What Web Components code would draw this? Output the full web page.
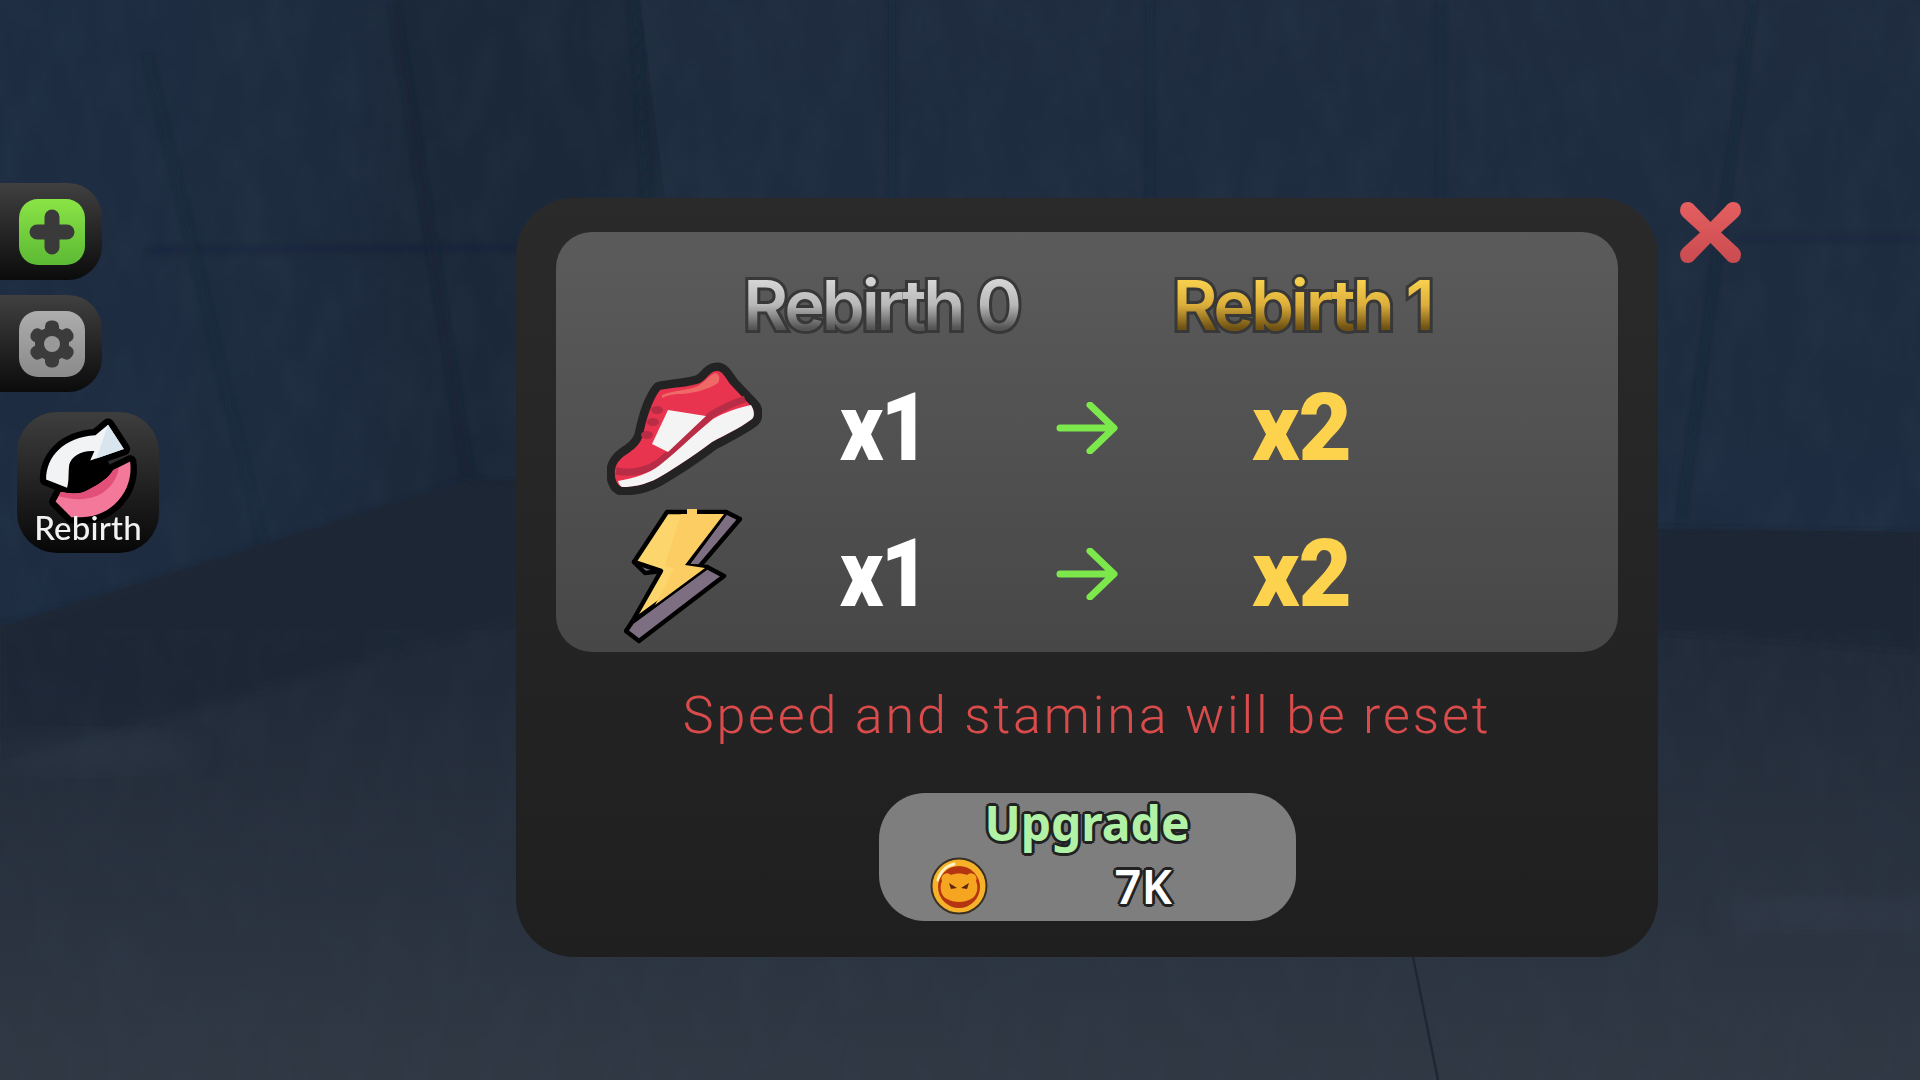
<!DOCTYPE html>
<html lang="en">
<head>
<meta charset="utf-8">
<title>Rebirth</title>
<style>
html,body{margin:0;padding:0;background:#1e2c42;}
</style>
</head>
<body>
<game-screen>
  <game-scene></game-scene>
  <side-rail>
    <rail-button>
      <svg viewBox="0 0 66 66" width="66" height="66" aria-hidden="true">
        <defs><linearGradient id="g" x1="0" y1="0" x2="0" y2="1"><stop offset="0" stop-color="#8ae446"/><stop offset="1" stop-color="#5cb934"/></linearGradient></defs>
        <rect width="66" height="66" rx="19" fill="url(#g)"/>
        <path d="M33 18V48M18 33H48" stroke="#3a3a3a" stroke-width="15" stroke-linecap="round" fill="none"/>
      </svg>
    </rail-button>
    <rail-button>
      <svg viewBox="0 0 66 66" width="66" height="66" aria-hidden="true">
        <defs><linearGradient id="s" x1="0" y1="0" x2="0" y2="1"><stop offset="0" stop-color="#adadad"/><stop offset="1" stop-color="#8a8a8a"/></linearGradient></defs>
        <rect width="66" height="66" rx="19" fill="url(#s)"/>
        <g fill="#3b3b3b">
          <circle cx="33" cy="33" r="17"/>
          <rect x="26" y="9.500" width="14" height="47" rx="6"/>
          <rect x="26" y="9.500" width="14" height="47" rx="6" transform="rotate(60 33 33)"/>
          <rect x="26" y="9.500" width="14" height="47" rx="6" transform="rotate(120 33 33)"/>
        </g>
        <circle cx="33" cy="33" r="8" fill="#999"/>
      </svg>
    </rail-button>
    <rebirth-button>Rebirth</rebirth-button>
  </side-rail>
  <rebirth-modal>
    <stat-board>
      <glow-title tone="silver" style="grid-column:2">Rebirth 0</glow-title>
      <glow-title tone="gold" style="grid-column:4">Rebirth 1</glow-title>

      <svg style="grid-column:1" viewBox="17 12 155 133" width="155" height="133" aria-hidden="true">
        <path d="M70 40C84 37 100 37 110 33C117 29 120 21 127 21C133 21 136 29 141 35L161 56C165 60 165 66 162 69C150 78 135 85 122 92C105 105 85 118 68 128C55 135 42 137 33 137C27 137 24 128 25 120C26 112 32 107 40 102C47 97 51 92 53 85C56 70 62 50 70 40Z" fill="#e8344f" stroke="#232323" stroke-width="17" stroke-linejoin="round"/>
        <path d="M70 40C84 37 100 37 110 33C117 29 120 21 127 21C133 21 136 29 141 35L161 56C165 60 165 66 162 69C150 78 135 85 122 92C105 105 85 118 68 128C55 135 42 137 33 137C27 137 24 128 25 120C26 112 32 107 40 102C47 97 51 92 53 85C56 70 62 50 70 40Z" fill="#e8344f"/>
        <path d="M72 45C85 40 100 40 108 36C115 32 120 24 126 23C130 25 130 30 128 33C118 40 100 44 90 44C83 44 76 46 72 48Z" fill="#ef6a66"/>
        <path d="M155 49C143 53 131 59 121 65C103 82 88 97 68 113C56 121 42 124 26 121" fill="none" stroke="#b92c45" stroke-width="7"/>
        <path d="M161 55C164 60 165 66 162 69C150 78 135 85 122 92C105 105 85 118 68 128C55 135 42 137 33 137C31 137 29 135 28 131C45 128 58 124 70 115C88 101 103 85 123 69C133 63 150 57 161 55Z" fill="#f5f4f4"/>
        <path d="M78 60L116 66L78 102L62 94Z" fill="#f5f4f4"/>
        <g fill="#b92c45"><ellipse cx="67" cy="60" rx="6" ry="4"/><ellipse cx="63" cy="72" rx="6" ry="4"/><ellipse cx="57" cy="85" rx="6" ry="4"/></g>
      </svg>
      <big-value style="grid-column:2">x1</big-value>
      <green-arrow style="grid-column:3"></green-arrow>
      <big-value tone="gold" style="grid-column:4">x2</big-value>

      <svg style="grid-column:1" viewBox="35 156 120 139" width="120" height="139" aria-hidden="true">
        <g stroke="#000" stroke-width="4.500" stroke-linejoin="round">
          <path d="M137 163L151 170L110 218L97 217Z" fill="#7d6e82"/>
          <path d="M118 218L135 227L50 292L37 282L43 273Z" fill="#7d6e82"/>
          <path d="M45 213L56 224L72 222L60 214Z" fill="#7d6e82"/>
          <path d="M78 163H137L97 217L118 218L43 273L72 222L45 213Z" fill="#fdd56d"/>
        </g>
        <path d="M92 165H135L96 216L116 219L66 256L85 220L76 216Z" fill="#fbcd62"/>
        <rect x="98" y="160" width="10" height="5" fill="#fbcd62"/>
      </svg>
      <big-value style="grid-column:2">x1</big-value>
      <green-arrow style="grid-column:3"></green-arrow>
      <big-value tone="gold" style="grid-column:4">x2</big-value>
    </stat-board>
    <warn-line>Speed and stamina will be reset</warn-line>
    <upgrade-button cost="7K">Upgrade</upgrade-button>
  </rebirth-modal>
  <close-cross></close-cross>
</game-screen>

<script>
function def(name, css, html, init) {
  customElements.define(name, class extends HTMLElement {
    constructor() {
      super();
      const r = this.attachShadow({mode:'open'});
      r.innerHTML = '<style>' + css + '</style>' + html;
    }
    connectedCallback() { if (init) init(this, this.shadowRoot); }
  });
}

def('game-screen',
  ':host{display:flex;position:relative;width:1920px;height:1080px;overflow:hidden;background:#1e2c42;align-items:flex-start;}',
  '<slot></slot>');

def('game-scene',
  ':host{position:absolute;left:0;top:0;width:1920px;height:1080px;display:block;}svg{display:block;}',
  `<svg width="1920" height="1080" viewBox="0 0 1920 1080" aria-hidden="true">
    <defs>
      <linearGradient id="wall" x1="0" y1="0" x2="0" y2="1"><stop offset="0" stop-color="#1f2c40"/><stop offset="1" stop-color="#1d2c42"/></linearGradient>
      <linearGradient id="wallL" x1="0" y1="0" x2="1" y2="0"><stop offset="0" stop-color="#1d2c41"/><stop offset=".6" stop-color="#1e2c40"/><stop offset="1" stop-color="#1b2739"/></linearGradient>
      <linearGradient id="floor" x1="0" y1="0" x2="0" y2="1"><stop offset="0" stop-color="#1c2634"/><stop offset=".3" stop-color="#222b39"/><stop offset="1" stop-color="#303844"/></linearGradient>
      <filter id="soft" x="-5%" y="-5%" width="110%" height="110%"><feGaussianBlur stdDeviation="3"/></filter>
      <filter id="soft2" x="-20%" y="-20%" width="140%" height="140%"><feGaussianBlur stdDeviation="14"/></filter>
      <filter id="grain" x="0" y="0" width="100%" height="100%">
        <feTurbulence type="fractalNoise" baseFrequency="0.03 0.014" numOctaves="3" seed="7"/>
        <feColorMatrix values="0 0 0 0 .05  0 0 0 0 .08  0 0 0 0 .12  1.6 0 0 0 -.55"/>
      </filter>
    </defs>
    <rect width="1920" height="1080" fill="url(#wall)"/>
    <polygon points="0,0 393,0 469,480 0,627" fill="url(#wallL)"/>
    <polygon points="393,0 640,0 700,480 469,480" fill="#1b283a"/>
    <rect width="1920" height="640" filter="url(#grain)" opacity=".14"/>
    <g fill="none" stroke="#16202f" filter="url(#soft)">
      <path d="M147 55L263 544" stroke-width="5" opacity=".4"/>
      <path d="M393 0L469 480" stroke-width="6" opacity=".55"/>
      <path d="M634 0L647 200" stroke-width="5" opacity=".4"/>
      <path d="M892 0V200M1150 0V200M1440 0V200" stroke-width="5" opacity=".3"/>
      <path d="M147 250L470 248L700 246" stroke-width="4" opacity=".25"/>
      <path d="M1740 238H1920" stroke-width="3" opacity=".25"/>
      <path d="M1753 0L1680 523" stroke-width="4" opacity=".45"/>
    </g>
    <polygon points="0,627 469,480 1000,480 1660,529 1920,532 1920,1080 0,1080" fill="url(#floor)"/>
    <polygon points="0,627 469,480 520,483 520,620 0,762" fill="#1c2634" opacity=".85" filter="url(#soft)"/>
    <polygon points="1655,529 1920,533 1920,650 1655,630" fill="#1c2634" opacity=".9" filter="url(#soft)"/>
    <polygon points="0,762 520,620 1000,620 1000,1080 0,1080" fill="url(#floor)" opacity=".35"/>
    <ellipse cx="90" cy="752" rx="110" ry="18" fill="#333d4c" opacity=".4" filter="url(#soft2)"/>
    <ellipse cx="1830" cy="915" rx="110" ry="14" fill="#394252" opacity=".4" filter="url(#soft2)"/>
    <rect y="630" width="1920" height="450" filter="url(#grain)" opacity=".1"/>
    <path d="M1413 957L1438 1080" stroke="#1f2734" stroke-width="2.500" fill="none"/>
  </svg>`);

def('side-rail',
  ':host{display:flex;position:relative;flex-direction:column;align-items:flex-start;width:516px;flex:none;padding-top:183px;box-sizing:border-box;}',
  '<slot></slot>');

def('rail-button',
  `:host{display:flex;align-items:center;justify-content:flex-end;box-sizing:border-box;width:102px;height:97px;padding-right:17px;margin-bottom:15px;
     border-radius:0 34px 34px 0;background:linear-gradient(#404040,#0b0b0b);}`,
  '<slot></slot>');

def('rebirth-button',
  `:host{display:block;position:relative;box-sizing:border-box;width:142px;height:141px;margin:5px 0 0 17px;border-radius:40px;
     background:linear-gradient(#3e3e3e,#070707);font:500 33px/1 "Lato","Noto Sans",sans-serif;color:#f2f2f2;}
   svg{position:absolute;left:0;top:0;display:block;}
   .l{position:absolute;left:0;right:0;bottom:9px;text-align:center;letter-spacing:.2px;}`,
  `<svg viewBox="7 7 142 141" width="142" height="141" aria-hidden="true">
     <g transform="translate(76 66) scale(1.05) translate(-76 -66)">
       <g stroke="#000" stroke-width="12" stroke-linejoin="round" fill="#000">
         <path d="M38 74C38 52 55 34 85 32L97 22L112 45L80 56L84 47C72 46 62 52 60 60C59 68 60 75 58 82Z"/>
         <path d="M118 57C122 85 100 110 72 110L62 110L47 95L52 86C62 88 72 88 78 84C90 78 98 72 102 65Z"/>
         <circle cx="78" cy="68" r="16"/>
       </g>
       <path d="M38 74C38 52 55 34 85 32L97 22L112 45L80 56L84 47C72 46 62 52 60 60C59 68 60 75 58 82Z" fill="#f1f3f5"/>
       <path d="M97 22L112 45L86 54Z" fill="#d8e5ee"/>
       <path d="M118 57C122 85 100 110 72 110L62 110L47 95L52 86C62 88 72 88 78 84C90 78 98 72 102 65Z" fill="#f4789a"/>
       <path d="M52 86C62 88 72 88 78 84C90 78 98 72 102 65L107 63C106 76 94 90 78 92C68 94 58 92 50 90Z" fill="#e2507a"/>
     </g>
   </svg><div class="l"><slot></slot></div>`);

def('rebirth-modal',
  `:host{display:flex;position:relative;flex:none;flex-direction:column;align-items:center;box-sizing:border-box;width:1142px;height:759px;margin-top:198px;padding:34px 40px 36px;
     border-radius:58px;background:linear-gradient(#2b2a2a,#201f1f);}`,
  '<slot></slot>');

def('stat-board',
  `:host{display:grid;box-sizing:border-box;width:1062px;height:420px;flex:none;padding-top:40px;
     grid-template-columns:256px 138px 274px 156px 238px;grid-template-rows:80px 140px 140px;row-gap:6px;justify-items:center;align-items:center;
     border-radius:36px;background:linear-gradient(#5b5b5b,#474747);}`,
  '<slot></slot>');

def('glow-title',
  `:host{display:block;align-self:start;position:relative;white-space:nowrap;font:600 69px/66px "Inter","DejaVu Sans",sans-serif;letter-spacing:-3.2px;}
   .t{position:relative;display:block;color:transparent;-webkit-background-clip:text;background-clip:text;}
   :host([tone=silver]) .t{background-image:linear-gradient(#d4d4d4 15%,#b8b8b8 50%,#555 85%);}
   :host([tone=gold]) .t{background-image:linear-gradient(#f6cf4d 15%,#dcae3a 50%,#6f5213 85%);}
   .o{position:absolute;left:0;top:0;color:transparent;-webkit-text-stroke:6px #383838;}
   .o::before{content:attr(data-t);}`,
  '<span class="o"></span><span class="t"><slot></slot></span>',
  (h,r)=>{ r.querySelector('.o').setAttribute('data-t', h.textContent); });

def('big-value',
  `:host{display:block;font:900 94px/1 "Roboto","Liberation Sans",sans-serif;color:#fff;white-space:nowrap;transform:translateX(2px) scaleX(.9);letter-spacing:-3px;}
   :host([tone=gold]){color:#fdd24d;transform:translateX(-1px) scaleX(.98);letter-spacing:-1px;}`,
  '<slot></slot>');

def('green-arrow',
  ':host{display:block;width:62px;height:52px;}svg{display:block;}',
  `<svg viewBox="0 0 62 52" width="62" height="52" aria-hidden="true"><path d="M4 26H57M34 3L58 26L34 49" fill="none" stroke="#7de84b" stroke-width="7" stroke-linecap="round" stroke-linejoin="round"/></svg>`);

def('warn-line',
  `:host{display:flex;flex:1;align-items:center;padding-bottom:14px;box-sizing:border-box;font:300 52px/1 "Roboto","Liberation Sans",sans-serif;letter-spacing:2.85px;color:#da4b4b;white-space:nowrap;}`,
  '<slot></slot>');

def('upgrade-button',
  `:host{display:flex;flex:none;flex-direction:column;align-items:center;box-sizing:border-box;width:417px;height:128px;border-radius:46px;background:#7e7e7e;position:relative;}
   .u{font:700 48px/60px "Noto Sans","Open Sans",sans-serif;color:#b2f2a6;
      text-shadow:3px 0 #222,-3px 0 #222,0 3px #222,0 -3px #222,2px 2px #222,-2px 2px #222,2px -2px #222,-2px -2px #222;}
   .row{display:flex;align-items:center;width:100%;height:60px;margin-top:3px;padding-left:51px;box-sizing:border-box;}
   .c{font:600 47px/1 "Noto Sans","Open Sans",sans-serif;color:#fff;margin-left:127px;
      text-shadow:3px 0 #222,-3px 0 #222,0 3px #222,0 -3px #222,2px 2px #222,-2px 2px #222,2px -2px #222,-2px -2px #222;}
   svg{display:block;flex:none;}`,
  `<div class="u"><slot></slot></div>
   <div class="row">
     <svg viewBox="0 0 58 58" width="58" height="58" aria-hidden="true">
       <circle cx="29" cy="29" r="27.500" fill="#f6b32a" stroke="#3a3024" stroke-width="2"/>
       <path d="M8 23A22 22 0 0 1 24 7" fill="none" stroke="#fff1c0" stroke-width="3" stroke-linecap="round"/>
       <circle cx="29" cy="30" r="21" fill="#b53512"/>
       <path d="M12 24a5.500 5.500 0 0 1 9-6c5-2 11-2 16 0a5.500 5.500 0 0 1 9 6c3 7 1 15-5 18c-7 4-17 4-24 0c-6-3-8-11-5-18Z" fill="#f5a51f"/>
       <path d="M19 26l8 5l-6 1ZM39 26l-8 5l6 1Z" fill="#5a2508"/>
     </svg>
     <span class="c"></span>
   </div>`,
  (h,r)=>{ r.querySelector('.c').textContent = h.getAttribute('cost'); });

def('close-cross',
  ':host{display:block;position:relative;flex:none;width:61px;height:61px;margin:202px 0 0 22px;}svg{display:block;}',
  `<svg viewBox="0 0 61 61" width="61" height="61" aria-hidden="true">
     <defs><linearGradient id="x" x1="0" y1="0" x2="0" y2="1"><stop offset="0" stop-color="#e55f60"/><stop offset="1" stop-color="#c94b50"/></linearGradient></defs>
     <path d="M0 9Q0 0 8 0Q12 0 15 4L30.500 20L46 4Q49 0 53 0Q61 0 61 9Q61 12 58 15L41 30.500L58 46Q61 49 61 52Q61 61 53 61Q49 61 46 57L30.500 41L15 57Q12 61 8 61Q0 61 0 52Q0 49 3 46L20 30.500L3 15Q0 12 0 9Z" fill="url(#x)"/>
   </svg>`);
</script>
</body>
</html>
